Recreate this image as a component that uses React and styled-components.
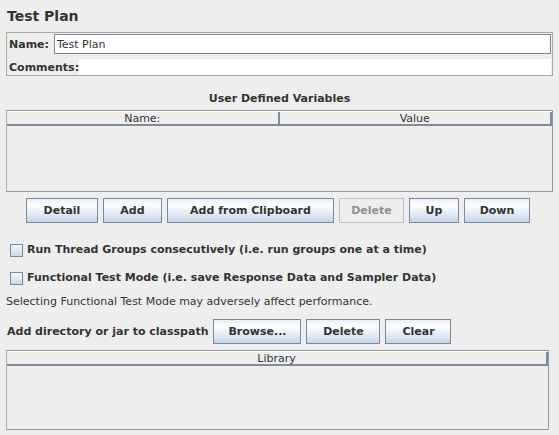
import React from "react";
import styled, { createGlobalStyle } from "styled-components";

const GlobalStyle = createGlobalStyle`
  html, body {
    margin: 0;
    padding: 0;
    background: #eeeeee;
  }
  body {
    font-family: "DejaVu Sans", "Liberation Sans", sans-serif;
    font-size: 11px;
    color: #333333;
  }
`;

const Page = styled.div`
  width: 559px;
  height: 435px;
  overflow: hidden;
  box-sizing: border-box;
  padding: 6px 6px 0 6px;
  background: #eeeeee;
  display: flex;
  flex-direction: column;
`;

const Title = styled.h1`
  margin: 0 0 0 1px;
  font-size: 14px;
  font-weight: bold;
  line-height: 20px;
  color: #333333;
`;

const NameBox = styled.div`
  margin-top: 6px;
  width: 547px;
  box-sizing: border-box;
  border: 1px solid #a8a8a8;
  display: flex;
  flex-direction: column;
  gap: 5px;
  padding: 0 1px 0 2px;
`;

const FieldRow = styled.div`
  display: flex;
  align-items: center;
  height: ${(p) => p.h}px;
  margin-top: ${(p) => p.mt || 0}px;
`;

const Label = styled.span`
  font-weight: bold;
  color: #333333;
  padding-right: ${(p) => p.pr || 0}px;
`;

const TextField = styled.div`
  flex: 1;
  height: 100%;
  box-sizing: border-box;
  background: #ffffff;
  border: ${(p) => (p.framed ? "1px solid #7a8a99" : "none")};
  display: flex;
  align-items: center;
  padding-left: 2px;
  color: #333333;
`;

const SectionTitle = styled.div`
  margin-top: 14px;
  text-align: center;
  font-weight: bold;
  line-height: 18px;
`;

const Table = styled.div`
  margin-top: ${(p) => p.mt}px;
  width: ${(p) => p.w}px;
  height: ${(p) => p.h}px;
  box-sizing: border-box;
  border: 1px solid #8c99a5;
  border-left-color: #a8b0b8;
  background: #eeeeee;
  display: flex;
  flex-direction: column;
`;

const HeaderRow = styled.div`
  display: flex;
  height: 15px;
  box-sizing: border-box;
  border-top: 1px solid #ffffff;
  border-bottom: 2px solid #7f8d9a;
`;

const HeaderCell = styled.div`
  flex: 1;
  box-sizing: border-box;
  border-right: 2px solid #7f8d9a;
  text-align: center;
  line-height: 13px;
  color: #333333;
`;

const ButtonRow = styled.div`
  display: flex;
  gap: ${(p) => p.gap || 5}px;
  margin-top: ${(p) => p.mt || 0}px;
  padding-left: ${(p) => p.pl || 0}px;
  align-items: center;
`;

const Button = styled.button`
  height: 25px;
  width: ${(p) => p.w}px;
  box-sizing: border-box;
  padding: 0;
  font-family: "DejaVu Sans", "Liberation Sans", sans-serif;
  font-size: 11px;
  font-weight: bold;
  color: ${(p) => (p.disabled ? "#8e8f91" : "#333333")};
  border: 1px solid ${(p) => (p.disabled ? "#b8c2cc" : "#7a8a99")};
  border-radius: 0;
  background: ${(p) =>
    p.disabled
      ? "#eeeeee"
      : "linear-gradient(to bottom, #e8eff7 0%, #ffffff 25%, #f2f6fa 45%, #c4d6e9 100%)"};
`;

const CheckRow = styled.label`
  display: flex;
  align-items: center;
  gap: 4px;
  margin-top: ${(p) => p.mt}px;
  padding-left: 4px;
  font-weight: bold;
  line-height: 16px;
`;

const Box = styled.span`
  width: 13px;
  height: 13px;
  box-sizing: border-box;
  border: 1px solid #7a8a99;
  background: linear-gradient(to bottom, #f4f8fb 0%, #dbe6f1 60%, #c9d9ea 100%);
`;

const Note = styled.div`
  margin-top: 8px;
  line-height: 16px;
`;

const ClasspathLabel = styled.span`
  font-weight: bold;
  padding-left: 1px;
`;

const App = () => {
  return (
    <Page>
      <GlobalStyle />
      <Title>Test Plan</Title>
      <NameBox>
        <FieldRow h={20} mt={1}>
          <Label pr={5}>Name:</Label>
          <TextField framed>Test Plan</TextField>
        </FieldRow>
        <FieldRow h={16}>
          <Label>Comments:</Label>
          <TextField />
        </FieldRow>
      </NameBox>

      <SectionTitle>User Defined Variables</SectionTitle>
      <Table mt={2} w={547} h={82}>
        <HeaderRow>
          <HeaderCell>Name:</HeaderCell>
          <HeaderCell>Value</HeaderCell>
        </HeaderRow>
      </Table>

      <ButtonRow mt={6} pl={20}>
        <Button w={72}>Detail</Button>
        <Button w={59}>Add</Button>
        <Button w={167}>Add from Clipboard</Button>
        <Button w={65} disabled>
          Delete
        </Button>
        <Button w={50}>Up</Button>
        <Button w={66}>Down</Button>
      </ButtonRow>

      <CheckRow mt={19}>
        <Box />
        Run Thread Groups consecutively (i.e. run groups one at a time)
      </CheckRow>
      <CheckRow mt={12}>
        <Box />
        Functional Test Mode (i.e. save Response Data and Sampler Data)
      </CheckRow>
      <Note>Selecting Functional Test Mode may adversely affect performance.</Note>

      <ButtonRow mt={9} gap={5}>
        <ClasspathLabel>Add directory or jar to classpath</ClasspathLabel>
        <Button w={88}>Browse...</Button>
        <Button w={74}>Delete</Button>
        <Button w={66}>Clear</Button>
      </ButtonRow>

      <Table mt={6} w={543} h={80}>
        <HeaderRow>
          <HeaderCell>Library</HeaderCell>
        </HeaderRow>
      </Table>
    </Page>
  );
};

export default App;
